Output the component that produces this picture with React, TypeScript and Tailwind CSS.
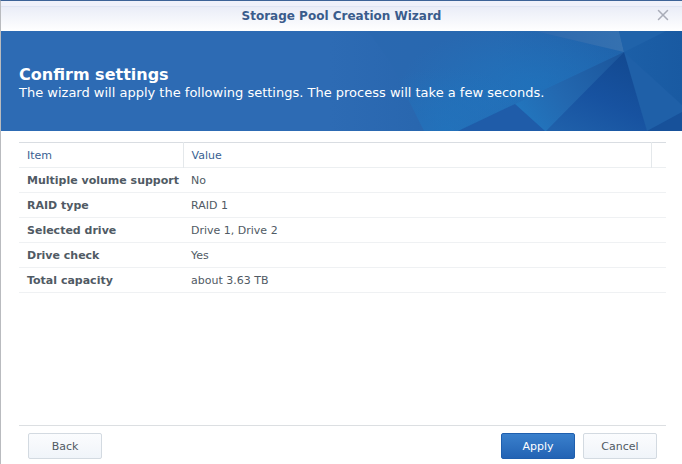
import { X } from 'lucide-react'

interface Setting {
  item: string
  value: string
}

const settings: Setting[] = [
  { item: 'Multiple volume support', value: 'No' },
  { item: 'RAID type', value: 'RAID 1' },
  { item: 'Selected drive', value: 'Drive 1, Drive 2' },
  { item: 'Drive check', value: 'Yes' },
  { item: 'Total capacity', value: 'about 3.63 TB' },
]

/** Folded-paper artwork on the right side of the banner. */
function BannerArt() {
  return (
    <svg
      className="absolute inset-y-0 right-0 h-full"
      viewBox="0 0 352 100"
      preserveAspectRatio="xMaxYMid slice"
      aria-hidden="true"
    >
      <defs>
        <linearGradient id="base" x1="0" y1="0" x2="1" y2="0">
          <stop offset="0" stopColor="#2d6bb4" />
          <stop offset="0.3" stopColor="#2866ae" />
          <stop offset="1" stopColor="#2064ab" />
        </linearGradient>
        <linearGradient id="wide" x1="0" y1="0" x2="1" y2="0">
          <stop offset="0" stopColor="#2a68b0" />
          <stop offset="0.5" stopColor="#2768b0" />
          <stop offset="1" stopColor="#1f62aa" />
        </linearGradient>
        <radialGradient id="glow">
          <stop offset="0" stopColor="#1e78c2" stopOpacity="0.6" />
          <stop offset="0.5" stopColor="#1e78c2" stopOpacity="0.32" />
          <stop offset="1" stopColor="#1e78c2" stopOpacity="0" />
        </radialGradient>
        <linearGradient id="top" x1="0" y1="0" x2="1" y2="0">
          <stop offset="0" stopColor="#2d69ae" />
          <stop offset="1" stopColor="#3571b0" />
        </linearGradient>
        <linearGradient id="beam" gradientUnits="userSpaceOnUse" x1="294" y1="21" x2="190" y2="95">
          <stop offset="0" stopColor="#1b559b" />
          <stop offset="0.6" stopColor="#2368b0" />
          <stop offset="1" stopColor="#2278c0" />
        </linearGradient>
        <linearGradient id="dark" gradientUnits="userSpaceOnUse" x1="290" y1="25" x2="250" y2="110">
          <stop offset="0" stopColor="#134a92" />
          <stop offset="0.5" stopColor="#1752a0" />
          <stop offset="1" stopColor="#1f60aa" />
        </linearGradient>
        <linearGradient id="right" x1="0" y1="0" x2="1" y2="0">
          <stop offset="0" stopColor="#1c5fa7" />
          <stop offset="1" stopColor="#195aa2" />
        </linearGradient>
        <clipPath id="wideClip">
          <path d="M38 0H205L294 21L128 100H94Q74 60 60 31Z" />
        </clipPath>
      </defs>
      <rect width="352" height="100" fill="url(#base)" />
      <path d="M38 0H205L294 21L128 100H94Q74 60 60 31Z" fill="url(#wide)" />
      <g clipPath="url(#wideClip)">
        <ellipse cx="200" cy="54" rx="130" ry="60" fill="url(#glow)" />
        <ellipse cx="116" cy="100" rx="90" ry="64" fill="url(#glow)" />
      </g>
      <path d="M205 0H289L294 21Z" fill="url(#top)" />
      <path d="M289 0H336L294 21Z" fill="#2063aa" />
      <path d="M294 21L336 0H352V100H317Z" fill="url(#right)" />
      <path d="M294 21L352 74V100H317Z" fill="#1f60a8" />
      <path d="M317 100L352 81V100Z" fill="#17519a" />
      <path d="M294 21L128 100H218Z" fill="url(#beam)" />
      <path d="M128 100L185 73L215 100Z" fill="#1f5ca9" />
      <path d="M294 21L216 100H317Z" fill="url(#dark)" />
    </svg>
  )
}

const secondaryButton =
  'h-[26px] w-[74px] rounded-xs border border-[#d3dae1] bg-linear-to-b from-[#fbfcfe] to-[#f0f4f9] pt-0.5 text-[#505a64]'

export default function App() {
  return (
    <div
      role="dialog"
      aria-labelledby="wizard-title"
      className="flex min-h-screen flex-col border-t border-l border-t-[#3d6397] border-l-[#b9bbbf] bg-white font-['DejaVu_Sans',Verdana,sans-serif] text-[11px] text-[#505a64]"
    >
      <div className="h-[6px] shrink-0 border-b border-[#dfe5f3] bg-[#eff1fa]" />
      <header className="relative flex h-6 shrink-0 items-center justify-center bg-linear-to-b from-[#eaedf7] to-white pb-1.5">
        <h1 id="wizard-title" className="text-xs font-bold text-[#3a5c8c]">
          Storage Pool Creation Wizard
        </h1>
        <button
          aria-label="Close"
          className="absolute top-0 right-[11px] flex h-4 w-4 items-center justify-center text-[#a9acb8]"
        >
          <X className="h-[18px] w-[18px] shrink-0" strokeWidth={2} aria-hidden="true" />
        </button>
      </header>

      <section className="relative flex h-[100px] shrink-0 flex-col justify-center overflow-hidden bg-[#2d6bb4] px-[18px] pt-1 text-white">
        <BannerArt />
        <h2 className="relative text-base leading-5 font-bold">Confirm settings</h2>
        <p className="relative text-[13px] leading-4">
          The wizard will apply the following settings. The process will take a few seconds.
        </p>
      </section>

      <main className="flex-1 px-[18px] pt-[11px] pr-4">
        <table className="w-full border-collapse border-t border-[#d9dde2] text-left">
          <thead>
            <tr className="h-[25px] border-b border-[#eceff1] text-[#3a5f92]">
              <th scope="col" className="w-[164px] pt-0.5 pl-2 font-normal">
                Item
              </th>
              <th scope="col" className="border-x border-[#e4e8eb] px-2 pt-0.5 font-normal">
                Value
              </th>
              <td className="w-[15px]" />
            </tr>
          </thead>
          <tbody>
            {settings.map((s) => (
              <tr key={s.item} className="h-[25px] border-b border-[#eff1f3]">
                <th scope="row" className="pt-0.5 pl-2 font-bold whitespace-nowrap">
                  {s.item}
                </th>
                <td colSpan={2} className="px-2 pt-0.5">
                  {s.value}
                </td>
              </tr>
            ))}
          </tbody>
        </table>
      </main>

      <footer className="mr-4 ml-[18px] flex h-[39px] shrink-0 items-start gap-2 border-t border-[#dcdfe2] px-[9px] pt-[7px]">
        <button className={secondaryButton}>Back</button>
        <button className="ml-auto h-[26px] w-[74px] rounded-xs border border-[#1f5fae] bg-linear-to-b from-[#3a80cc] to-[#2363b4] pt-0.5 text-white">
          Apply
        </button>
        <button className={secondaryButton}>Cancel</button>
      </footer>
    </div>
  )
}
